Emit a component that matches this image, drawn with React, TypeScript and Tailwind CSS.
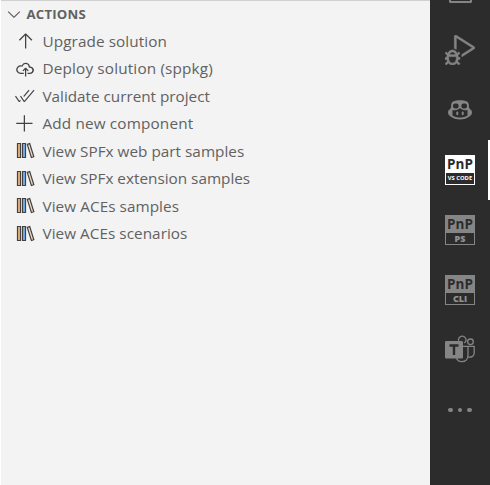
import type { ReactNode } from 'react';
import { VscArrowUp, VscCloudUpload, VscCheckAll, VscAdd, VscChevronDown, VscDebugAlt } from 'react-icons/vsc';

function Library() {
  return (
    <svg width="20" height="20" viewBox="0 0 20 20" fill="none" strokeWidth="1.2">
      <path d="M2.5 2.5h3v14h-3z" fill="#edb47c" stroke="#424242" />
      <path d="M7.5 2.5h3v14h-3z" fill="#78b4f0" stroke="#424242" />
      <path d="M12.3 3.4l2.4-.8 4.1 13.1-2.4.8z" fill="#f5dcc4" stroke="#424242" />
    </svg>
  );
}

function Copilot() {
  return (
    <svg width="24" height="20" viewBox="0 0 24 20" fill="#858585">
      <path
        fillRule="evenodd"
        d="M12 .2c3.5-.3 7.3.5 8.3 2.5.5 1.2.8 3 .6 4.8l1.2 1.7c1.2.5 1.9 1.7 1.9 3.3 0 1.6-.7 2.5-1.9 3.5C19.4 18.3 15.500 19.600 12 19.600S4.600 18.300 1.900 16C.7 15 0 14.100 0 12.500c0-1.600.7-2.800 1.900-3.300l1.200-1.700c-.2-1.800.1-3.600.6-4.800C4.700.700 8.500-.1 12 .2zM4.500 10v5.600c2.300 1.400 5 2 7.500 2s5.200-.6 7.500-2V10c-2.500.7-5.300.3-6.700-1.400h-1.600C9.800 10.300 7 10.700 4.500 10z"
      />
      <rect x="5" y="3.4" width="5.6" height="5" rx="2.2" fill="#2c2c2c" />
      <rect x="13.4" y="3.4" width="5.6" height="5" rx="2.2" fill="#2c2c2c" />
      <rect x="8.3" y="11.4" width="2" height="3.8" rx="1" />
      <rect x="13.7" y="11.4" width="2" height="3.8" rx="1" />
    </svg>
  );
}

const rows: { icon: ReactNode; label: string; track: string }[] = [
  { icon: <VscArrowUp size={20} />, label: 'Upgrade solution', track: 'tracking-[0.08px]' },
  { icon: <VscCloudUpload size={20} />, label: 'Deploy solution (sppkg)', track: 'tracking-[0.16px]' },
  { icon: <VscCheckAll size={20} />, label: 'Validate current project', track: 'tracking-[-0.02px]' },
  { icon: <VscAdd size={20} />, label: 'Add new component', track: 'tracking-[0.15px]' },
  { icon: <Library />, label: 'View SPFx web part samples', track: 'tracking-[0.02px]' },
  { icon: <Library />, label: 'View SPFx extension samples', track: 'tracking-[0px]' },
  { icon: <Library />, label: 'View ACEs samples', track: 'tracking-[0.06px]' },
  { icon: <Library />, label: 'View ACEs scenarios', track: 'tracking-[0.04px]' },
];

function PnP({ label, active, size }: { label: string; active?: boolean; size: string }) {
  return (
    <div className={`flex h-[30px] w-[30px] flex-col border ${active ? 'border-white bg-white' : 'border-[#858585] bg-[#858585]'}`}>
      <div className="flex h-[17px] items-center justify-center text-[13.5px] font-bold leading-none text-[#2c2c2c]">PnP</div>
      <div className={`flex h-[11px] items-center justify-center bg-[#2c2c2c] leading-none whitespace-nowrap ${size} ${active ? 'font-bold text-white' : 'font-extrabold text-[#929292]'}`}>
        {label}
      </div>
    </div>
  );
}

function Teams() {
  return (
    <svg width="30" height="30" viewBox="0 0 30 30" fill="none" stroke="#858585" strokeWidth="1.3">
      <path d="M13.7 5.8a3.7 3.7 0 1 1 5.6 2.2" />
      <circle cx="25.5" cy="6.8" r="2.8" />
      <path d="M18 11.3h5v9.200c0 3.700-2.700 6.100-6 6.100-3 0-5-1.500-5.600-4M23 11.300h6.200v6.800c0 3-2.500 4.500-6.200 4" />
      <rect x="0" y="6" width="18" height="17.5" rx="1.2" fill="#858585" stroke="none" />
      <path d="M4.5 10.5h9M9 10.5v9.5" stroke="#2c2c2c" strokeWidth="2.4" />
    </svg>
  );
}

export default function App() {
  return (
    <div className="flex h-[485px] w-[490px] overflow-hidden bg-[#f3f3f3] font-['Open_Sans','Noto_Sans',sans-serif]">
      <main className="w-[430px] border-l border-white">
        <div className="flex h-[27.5px] items-center border-t border-[#d0d0d0] pl-[3px] text-[#616161]">
          <VscChevronDown size={20} className="text-[#6b5a50]" />
          <h2 className="ml-[2.5px] text-[13.2px] font-bold leading-none tracking-[0.2px]">ACTIONS</h2>
        </div>
        <ul>
          {rows.map((r) => (
            <li key={r.label} className="flex h-[27.5px] items-center pl-[14px] text-[#424242]">
              {r.icon}
              <span className={`ml-[7.5px] text-[15.3px] leading-none whitespace-nowrap text-[#616161] ${r.track}`}>{r.label}</span>
            </li>
          ))}
        </ul>
      </main>
      <nav className="relative flex h-[485px] w-[60px] flex-col items-center bg-[#2c2c2c] text-[#858585]">
        <div className="flex h-5 w-full justify-center">
          <div className="h-[3px] w-[23px] rounded-b-[2px] border-x-2 border-b-2 border-[#858585]" />
        </div>
        <div className="flex h-[60px] items-center"><VscDebugAlt size={30} stroke="#858585" strokeWidth={0.5} /></div>
        <div className="flex h-[60px] items-center"><Copilot /></div>
        <div className="flex h-[60px] w-full items-center justify-center">
          <PnP label="VS CODE" active size="text-[5.8px]" />
          <div className="absolute right-0 h-[60px] w-[2px] bg-white" />
        </div>
        <div className="flex h-[60px] items-center"><PnP label="PS" size="text-[9px]" /></div>
        <div className="flex h-[60px] items-center"><PnP label="CLI" size="text-[9px]" /></div>
        <div className="flex h-[60px] items-center"><Teams /></div>
        <div className="flex h-[60px] items-center gap-[5px]">
          <i className="size-[4.5px] rounded-full bg-[#858585]" />
          <i className="size-[4.5px] rounded-full bg-[#858585]" />
          <i className="size-[4.5px] rounded-full bg-[#858585]" />
        </div>
      </nav>
    </div>
  );
}
